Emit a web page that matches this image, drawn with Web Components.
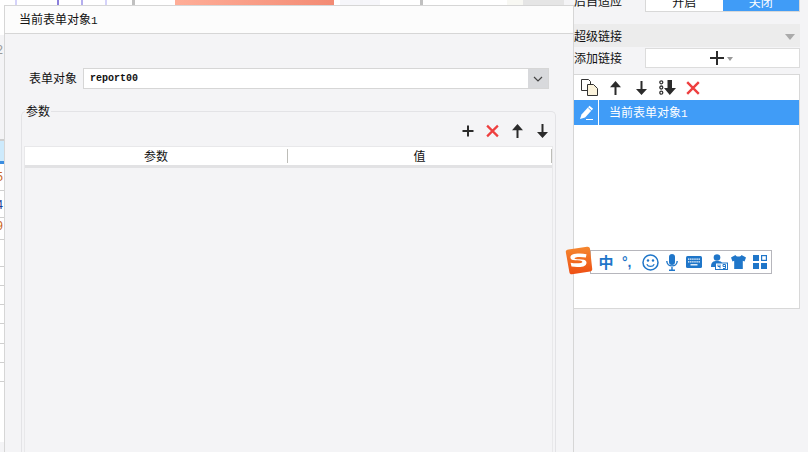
<!DOCTYPE html>
<html lang="zh"><head><meta charset="utf-8"><title>当前表单对象1</title>
<style>
html,body{margin:0;padding:0;height:100%;overflow:hidden;background:#f4f4f6}
body{font:12px/1.2 "Noto Sans CJK SC","Liberation Sans",sans-serif;color:#111}
</style></head><body>
<app-shell>
  <top-strip slot="canvas"></top-strip>
  <sheet-edge slot="canvas"></sheet-edge>
  <side-panel slot="side"></side-panel>
  <form-dialog slot="over"></form-dialog>
  <ime-bar slot="over"></ime-bar>
</app-shell>
<script>
const ICONS={
 plus:'<svg width="12" height="12" viewBox="0 0 12 12"><path d="M6 .5v11M.5 6h11" stroke="#2b2b2b" stroke-width="2" fill="none"/></svg>',
 plusBig:'<svg width="14" height="14" viewBox="0 0 14 14"><path d="M7 0v14M0 7h14" stroke="#2b2b2b" stroke-width="2" fill="none"/></svg>',
 x:'<svg width="14" height="14" viewBox="0 0 14 14"><path d="M1.2 1.2l11.6 11.6M12.8 1.2L1.2 12.8" stroke="#ee3f3f" stroke-width="2.4" fill="none"/></svg>',
 up:'<svg width="11" height="14" viewBox="0 0 11 14"><path d="M5.500 0L11 6.200H6.500V14H4.500V6.200H0z" fill="#2b2b2b"/></svg>',
 down:'<svg width="11" height="14" viewBox="0 0 11 14"><path d="M4.500 0H6.500V8H11L5.500 14 0 8H4.500z" fill="#2b2b2b"/></svg>',
 copy:'<svg width="17" height="17" viewBox="0 0 17 17"><path d="M.5.5h7l2 2v9H.5z" fill="#fff" stroke="#333"/><path d="M6.500 5.500h6l4 4v7h-10z" fill="#fbf3dc" stroke="#333"/></svg>',
 bulletDown:'<svg width="17" height="15" viewBox="0 0 17 15"><g fill="none" stroke="#333" stroke-width="1.300"><circle cx="2.300" cy="2.300" r="1.500"/><circle cx="2.300" cy="7.500" r="1.500"/><circle cx="2.300" cy="12.700" r="1.500"/></g><path d="M8.500 0H13V8H17L10.800 15 5 8H8.500z" fill="#2b2b2b"/></svg>',
 pencil:'<svg width="15" height="15" viewBox="0 0 15 15"><path d="M10.500.8l3.600 3-8 8.600L1 14l1.500-4.600z" fill="#fff"/><path d="M9.300 2.800l3.400 3" stroke="#409cf7" fill="none"/><path d="M7 14.500h7" stroke="#fff"/></svg>'
};
function def(name,html){
  const t=document.createElement('template');t.innerHTML=html;
  customElements.define(name,class extends HTMLElement{
    constructor(){super();this.attachShadow({mode:'open'}).appendChild(t.content.cloneNode(true))}
  });
}
def('app-shell',`<style>
:host{display:grid;grid-template-columns:574px 226px 8px;width:808px;height:452px;position:relative;overflow:hidden;background:#f4f4f6}
.canvas{display:flex;flex-direction:column;height:452px;overflow:hidden}
.side{overflow:hidden;height:452px}
</style><div class="canvas"><slot name="canvas"></slot></div><div class="side"><slot name="side"></slot></div><div></div><slot name="over"></slot>`);

def('top-strip',`<style>
:host{display:flex;height:5px;flex:none;background:#fff}
i{display:block;height:5px;flex:none}
</style>
<i style="width:15px"></i><i style="width:2px;background:#d5d3fa"></i><i style="width:40px"></i><i style="width:2px;background:#8b7fdc"></i><i style="width:22px"></i><i style="width:2px;background:#b4aeee"></i><i style="width:22px"></i><i style="width:2px;background:#d5d3fa"></i><i style="width:25px"></i><i style="width:3px;background:#c0c0c0"></i><i style="width:40px"></i>
<i style="width:159px;background:linear-gradient(90deg,#ffae98,#f38b74)"></i><i style="width:6px;background:#fff"></i><i style="width:40px;background:#f6f6fa"></i><i style="width:40px"></i><i style="width:3px;background:#c0c0c0"></i><i style="width:84px"></i><i style="width:16px;background:#f8f8f3"></i><i style="width:41px;background:#e5e5e5"></i><i style="width:10px;background:#f4f4f6"></i>`);

def('sheet-edge',`<style>
:host{display:block;width:4px;flex:none;overflow:hidden;font:12px "Liberation Mono",monospace;background:#fff}
div{box-sizing:border-box;border-bottom:1px solid #cfcfcf;line-height:18px;white-space:nowrap;overflow:hidden;color:#1c3f95}
.a{background:#f4f4f6;color:#999}
.sel{background:#cdeafc;border-top:1px solid #cfcfcf;border-bottom:3px solid #3b8de0}
</style>
<div style="height:30px;border:0"></div>
<div class="a" style="height:105px;padding-top:7px"><span style="margin-left:-4px">2</span></div>
<div class="sel" style="height:24px"></div>
<div style="height:27px;padding-top:5px"><span style="margin-left:-4px;color:#c9631c">5</span></div>
<div style="height:27px;padding-top:6px"><span style="margin-left:-4px">4</span></div>
<div style="height:22px"><span style="margin-left:-4px;color:#c9631c">9</span></div>
<div style="height:27px"></div><div style="height:19px"></div><div style="height:19px"></div><div style="height:19px"></div><div style="height:20px"></div><div style="height:19px"></div><div style="height:19px"></div>
<div style="height:60px;border:0"></div>`);

def('side-panel',`<style>
:host{display:flex;flex-direction:column;width:226px;height:320px;margin-top:-9px;font:12px/1.2 "Noto Sans CJK SC",sans-serif;color:#111}
.row{display:flex;align-items:center;height:21px}
.row>span{width:71px;flex:none;white-space:nowrap}
.toggle{display:flex;flex:1;height:21px;box-sizing:border-box;border:1px solid #d8d8d8;background:#fff;text-align:center;line-height:19px}
.toggle b{flex:1;font-weight:400}.toggle .on{background:#409cf7;color:#fff}
.group{display:flex;justify-content:space-between;align-items:center;height:23px;box-sizing:border-box;padding-top:2px;margin-top:12px;background:#ececec;padding-right:5px}
.tri{width:0;height:0;border:5px solid transparent;border-top:6px solid #aaa;border-bottom:0}
.add{flex:1;height:20px;box-sizing:border-box;border:1px solid #dcdcdc;background:#fff;display:flex;align-items:center;justify-content:center;gap:3px;padding-right:2px}
.add .t2{border:3px solid transparent;border-top:4px solid #999;border-bottom:0;margin-top:1px}
.list{margin-top:6px;box-sizing:border-box;border:1px solid #d8d8d8;border-left:0;background:#fff;display:flex;flex-direction:column;height:235px;flex:none}
.tools{display:flex;align-items:center;height:25px;padding-left:7px}
.tools span{display:flex;align-items:center}
.sel{display:flex;height:25px;background:#409cf7;color:#fff;align-items:center}
.ic{width:24px;display:flex;align-items:center;justify-content:center;height:25px;border-right:1px solid #fff}
.sel .t{margin-left:10px}
.d{font:11px "Liberation Mono",monospace}
</style>
<div class="row"><span>后自适应</span><div class="toggle"><b>开启</b><b class="on">关闭</b></div></div>
<div class="group"><span>超级链接</span><i class="tri"></i></div>
<div class="row" style="margin-top:1px;height:20px"><span>添加链接</span><div class="add">${ICONS.plusBig}<i class="t2"></i></div></div>
<div class="list">
 <div class="tools"><span>${ICONS.copy}</span><span style="margin-left:12px">${ICONS.up}</span><span style="margin-left:15px">${ICONS.down}</span><span style="margin-left:12px">${ICONS.bulletDown}</span><span style="margin-left:10px">${ICONS.x}</span></div>
 <div class="sel"><div class="ic">${ICONS.pencil}</div><div class="t">当前表单对象<span class="d">1</span></div></div>
</div>`);

def('form-dialog',`<style>
:host{position:absolute;left:4px;top:5px;width:570px;height:460px;box-sizing:border-box;border:1px solid #d6d6d6;border-bottom:0;background:#f4f4f6;display:flex;flex-direction:column;font:12px/1.2 "Noto Sans CJK SC",sans-serif;color:#111}
header{flex:none;box-sizing:border-box;background:#fcfcfc;border-bottom:1px solid #d6d6d6;padding:0 0 0 14px;line-height:25px;height:28px}
.d{font:11px "Liberation Mono",monospace}
.main{flex:1;display:flex;flex-direction:column;padding:34px 17px 0 16px}
.obj{display:flex;align-items:center;height:21px;padding-left:8px;margin-right:7px}
.obj label{width:54px;flex:none}
.sel{flex:1;height:21px;box-sizing:border-box;border:1px solid #d6d6d6;background:#fff;display:flex;align-items:center;justify-content:space-between;padding-left:6px;font:bold 10px "Liberation Mono",monospace}
.arr{width:20px;height:19px;background:#d8d9dc;display:flex;align-items:center;justify-content:center}
fieldset{margin:14px 0 0;padding:0 2px;border:1px solid #e3e3e6;border-bottom:0;border-radius:5px 5px 0 0;flex:1;min-width:0;display:flex;flex-direction:column}
legend{padding:0 1px;margin-left:1px;line-height:16px}
.tools{display:flex;justify-content:flex-end;align-items:center;gap:12px;height:30px;margin-top:-3px;padding-right:4px}
.tools span{display:flex;width:13px;justify-content:center}
.tbl{flex:1;border:1px solid #e8e8ea;border-width:1px 1px 0;display:flex;flex-direction:column}
.head{display:grid;grid-template-columns:263px 264px 1fr;height:18px;background:#fff;border-bottom:3px solid #e2e2e4;align-items:center;text-align:center}
.head div{box-sizing:border-box;height:14px;line-height:14px;border-right:1px solid #bdbdb8}
.head .last{border-right:0}
</style>
<header>当前表单对象<span class="d">1</span></header>
<div class="main">
 <div class="obj"><label>表单对象</label><div class="sel"><span>report00</span><span class="arr"><svg width="10" height="6" viewBox="0 0 10 6"><path d="M1 1l4 4 4-4" fill="none" stroke="#444" stroke-width="1.200"/></svg></span></div></div>
 <fieldset><legend>参数</legend>
  <div class="tools"><span>${ICONS.plus}</span><span>${ICONS.x}</span><span>${ICONS.up}</span><span>${ICONS.down}</span></div>
  <div class="tbl"><div class="head"><div>参数</div><div>值</div><div class="last"></div></div></div>
 </fieldset>
</div>`);

def('ime-bar',`<style>
:host{position:absolute;left:566px;top:246px;width:206px;height:29px;display:block}
.bar{position:absolute;left:24px;top:4px;width:182px;height:24px;box-sizing:border-box;border:1px solid #b6b6bc;background:#fff;display:flex;align-items:center;color:#1f76c9}
.bar>*{flex:none}
.zh{font:bold 15px "Noto Sans CJK SC",sans-serif;margin-left:7px;width:16px;text-align:center;line-height:20px}
.pt{font:bold 14px "Liberation Sans",sans-serif;margin-left:8px;width:13px;line-height:18px;white-space:nowrap}
svg{display:block}
.logo{position:absolute;left:-1px;top:0}
</style>
<div class="bar">
 <span class="zh">中</span><span class="pt">°,</span>
 <svg style="margin-left:7px" width="17" height="17" viewBox="0 0 17 17"><circle cx="8.500" cy="8.500" r="7.500" fill="none" stroke="#1f76c9" stroke-width="1.500"/><circle cx="6" cy="6.500" r="1.200" fill="#1f76c9"/><circle cx="11" cy="6.500" r="1.200" fill="#1f76c9"/><path d="M4.800 10.200c1.500 3 6 3 7.400 0" fill="none" stroke="#1f76c9" stroke-width="1.300"/></svg>
 <svg style="margin-left:7px" width="12" height="17" viewBox="0 0 12 17"><rect x="3" y="0" width="6" height="11" rx="3" fill="#1f76c9"/><path d="M.8 7c0 6.500 10.400 6.500 10.400 0M6 13v3M3 16.300h6" fill="none" stroke="#1f76c9" stroke-width="1.400"/></svg>
 <svg style="margin-left:8px" width="16" height="12" viewBox="0 0 16 12"><rect width="16" height="12" rx="1.500" fill="#1f76c9"/><path d="M2 3.200h12M2 5.900h12" stroke="#fff" stroke-width="1.200" stroke-dasharray="1.400 .7"/><path d="M4.500 8.800h7" stroke="#fff" stroke-width="1.300"/></svg>
 <svg style="margin-left:8px" width="18" height="16" viewBox="0 0 18 16"><circle cx="7" cy="3.500" r="3.300" fill="#1f76c9"/><path d="M1 13c0-5 2-6 6-6s6 1 6 6z" fill="#1f76c9"/><rect x="5.500" y="9" width="12" height="6.500" fill="#fff" stroke="#1f76c9"/><path d="M8 10.500v2h2M10 10.500v4M13 10.500h2.500v4H13M13 10.500v2h2.500" fill="none" stroke="#1f76c9"/></svg>
 <svg style="margin-left:3px" width="15" height="14" viewBox="0 0 15 14"><path d="M4.500 0L0 2.500 1.500 6.500 3.200 5.800V14h8.600V5.800l1.700.7L15 2.500 10.500 0C9.800 2 5.200 2 4.500 0z" fill="#1f76c9"/></svg>
 <svg style="margin-left:7px" width="14" height="14" viewBox="0 0 14 14"><path d="M0 0h6v6H0zM0 8h6v6H0zM8 8h6v6H8z" fill="#1f76c9"/><rect x="8.600" y=".6" width="4.800" height="4.800" fill="none" stroke="#1f76c9" stroke-width="1.200"/></svg>
</div>
<svg class="logo" width="28" height="29" viewBox="0 0 28 29"><defs><linearGradient id="g" x1="0" y1="0" x2="0" y2="1"><stop offset="0" stop-color="#f5872f"/><stop offset="1" stop-color="#ee4f14"/></linearGradient></defs><path d="M3.500 3.500L22 .8c1.800-.2 2.700.5 3 2l2.200 20c.2 1.500-.5 2.300-2 2.600L7 28.200c-1.500.1-2.300-.5-2.600-2L.8 6c-.2-1.300.9-2.300 2.700-2.500z" fill="url(#g)"/><path d="M21.500 8.200c-4.500-1-11-.8-14 .3-3 1.200-2.700 5 .5 5.600 2.700.5 7 .3 8.600.8 1.300.5.800 1.800-.7 2-2.800.5-6.500.5-10.300-.2l.9 3.800c4 .7 8.500.6 11.800-.1 4-.9 4.300-5.600.7-6.600-2.700-.6-6.700-.4-8.600-.7-1.200-.3-1.100-1.400.3-1.700 3-.5 6.800-.4 10.200.2z" fill="#fff"/></svg>`);
</script>
</body></html>
